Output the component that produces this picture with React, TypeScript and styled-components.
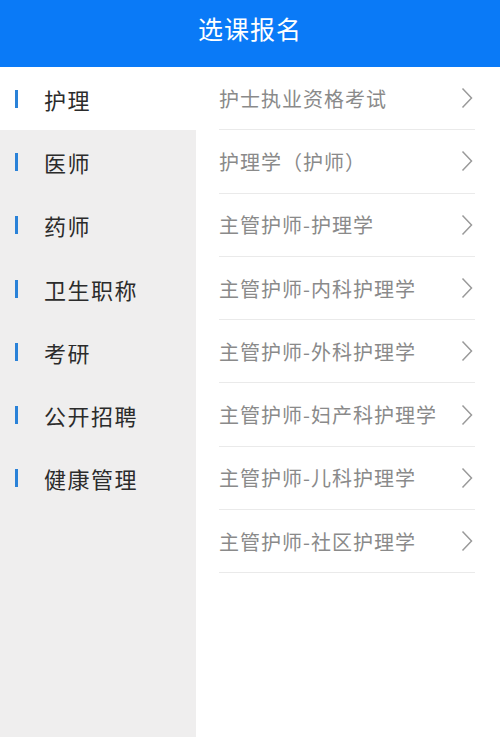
import styled, { createGlobalStyle } from 'styled-components';

const categories = ['护理', '医师', '药师', '卫生职称', '考研', '公开招聘', '健康管理'];

const courses = [
	'护士执业资格考试',
	'护理学（护师）',
	'主管护师-护理学',
	'主管护师-内科护理学',
	'主管护师-外科护理学',
	'主管护师-妇产科护理学',
	'主管护师-儿科护理学',
	'主管护师-社区护理学',
];

const Chevron = () => (
	<svg width="12" height="22" viewBox="0 0 12 22" fill="none">
		<path d="M1.5 1.5 L10.5 11 L1.5 20.5" stroke="#9a9a9a" strokeWidth="1.5" />
	</svg>
);

const App = () => {
	return (
		<>
			<GlobalStyle />
			<Page>
				<Header>选课报名</Header>
				<Body>
					<Sidebar>
						{categories.map((name, i) => (
							<CategoryItem key={name} $active={i === 0}>
								<Marker />
								<CategoryName>{name}</CategoryName>
							</CategoryItem>
						))}
					</Sidebar>
					<CourseList>
						{courses.map((course) => (
							<CourseRow key={course}>
								<CourseName>{course}</CourseName>
								<Chevron />
							</CourseRow>
						))}
					</CourseList>
				</Body>
			</Page>
		</>
	);
};

export default App;

const GlobalStyle = createGlobalStyle`
	html, body {
		margin: 0;
		padding: 0;
		background: #ffffff;
	}
	body {
		font-family: "Noto Sans CJK SC", "Noto Sans", sans-serif;
	}
`;

const Page = styled.div`
	width: 500px;
	height: 737px;
	display: flex;
	flex-direction: column;
	overflow: hidden;
`;

const Header = styled.div`
	height: 67px;
	flex-shrink: 0;
	background-color: #0a7af7;
	color: #ffffff;
	font-size: 25px;
	display: flex;
	align-items: center;
	justify-content: center;
	padding-bottom: 12px;
	box-sizing: border-box;
	letter-spacing: 1px;
`;

const Body = styled.div`
	flex: 1;
	display: flex;
	flex-direction: row;
`;

const Sidebar = styled.div`
	width: 196px;
	flex-shrink: 0;
	background-color: #efeeee;
	display: flex;
	flex-direction: column;
`;

const CategoryItem = styled.div<{ $active: boolean }>`
	height: 63.3px;
	display: flex;
	flex-direction: row;
	align-items: center;
	padding-left: 15px;
	background-color: ${({ $active }) => ($active ? '#ffffff' : 'transparent')};
`;

const Marker = styled.span`
	width: 3px;
	height: 18px;
	background-color: #2a82d8;
	margin-right: 26px;
`;

const CategoryName = styled.span`
	font-size: 22px;
	color: #2b2b2b;
	letter-spacing: 1.5px;
`;

const CourseList = styled.div`
	flex: 1;
	padding-left: 23px;
	padding-right: 25px;
	display: flex;
	flex-direction: column;
`;

const CourseRow = styled.div`
	height: 63.3px;
	box-sizing: border-box;
	display: flex;
	flex-direction: row;
	align-items: center;
	justify-content: space-between;
	border-bottom: 1px solid #eaeaea;
	padding-right: 2px;
`;

const CourseName = styled.span`
	font-size: 20px;
	color: #8a8a8a;
	letter-spacing: 1px;
`;
